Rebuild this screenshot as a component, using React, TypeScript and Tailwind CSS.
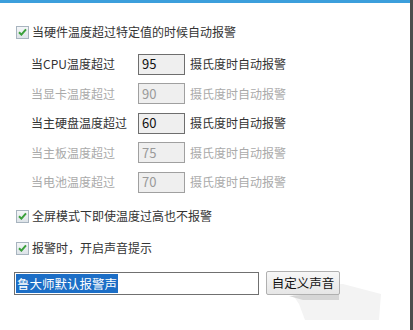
import React from "react";

const font = { fontFamily: '"Noto Sans CJK SC", "Noto Sans", sans-serif' };

function Check() {
  return (
    <span className="inline-flex h-[13px] w-[13px] items-center justify-center border border-[#a8b4bf] bg-gradient-to-b from-[#f4f6f8] to-[#dde3e8]">
      <svg width="9" height="8" viewBox="0 0 9 8">
        <path d="M1 4.2 L3.4 6.6 L8 1.4" fill="none" stroke="#3aa03a" strokeWidth="2" />
      </svg>
    </span>
  );
}

function TempRow({ label, value, enabled }: { label: string; value: string; enabled: boolean }) {
  const c = enabled ? "text-[#333]" : "text-[#aaa]";
  return (
    <div className="flex h-[22px] items-center">
      <span className={`w-[107px] text-[12px] ${c}`}>{label}</span>
      <span
        className={`flex h-[21px] w-[47px] items-center border bg-[#efefef] pl-[3px] text-[13px] ${
          enabled ? "border-[#6e6e6e] text-[#111]" : "border-[#a0a0a0] text-[#9a9a9a]"
        }`}
      >
        {value}
      </span>
      <span className={`ml-[5px] text-[12px] ${c}`}>摄氏度时自动报警</span>
    </div>
  );
}

export default function App() {
  return (
    <div className="relative h-[330px] w-[413px] overflow-hidden bg-white" style={font}>
      <svg className="absolute left-[283px] top-[282px]" width="100" height="42" viewBox="0 0 100 42">
        <polygon points="4,4 60,2 98,12 96,38 22,38 16,22" fill="#f3f3f3" />
        <polygon points="6,14 56,10 56,18 20,18" fill="#d6d6d6" />
      </svg>
      <div className="h-[3px] w-full bg-[#3c9fdc]" />
      <div className="absolute right-0 top-0 h-full w-[3px] bg-[#4d4d4d]" />
      <div className="relative flex flex-col pl-[16px]">
        <div className="mt-[19px] flex h-[20px] items-center gap-[3px]">
          <Check />
          <span className="text-[12px] text-[#333]">当硬件温度超过特定值的时候自动报警</span>
        </div>
        <div className="mt-[11px] flex flex-col gap-[7.5px] pl-[15px]">
          <TempRow label="当CPU温度超过" value="95" enabled />
          <TempRow label="当显卡温度超过" value="90" enabled={false} />
          <TempRow label="当主硬盘温度超过" value="60" enabled />
          <TempRow label="当主板温度超过" value="75" enabled={false} />
          <TempRow label="当电池温度超过" value="70" enabled={false} />
        </div>
        <div className="mt-[13px] flex h-[20px] items-center gap-[3px]">
          <Check />
          <span className="text-[12px] text-[#333]">全屏模式下即使温度过高也不报警</span>
        </div>
        <div className="mt-[12px] flex h-[20px] items-center gap-[3px]">
          <Check />
          <span className="text-[12px] text-[#333]">报警时，开启声音提示</span>
        </div>
        <div className="ml-[-2px] mt-[13px] flex items-center">
          <div className="flex h-[23px] w-[245px] items-center border border-[#707070] bg-white pl-[1px]">
            <span className="bg-[#1c6ec6] px-[1px] text-[12.5px] leading-[19px] text-white">鲁大师默认报警声</span>
          </div>
          <button className="ml-[7px] h-[24px] w-[74px] rounded-[2px] border border-[#b0b0b0] bg-gradient-to-b from-[#f7f7f7] to-[#e6e6e6] text-[12.5px] text-[#111]">
            自定义声音
          </button>
        </div>
      </div>
    </div>
  );
}
